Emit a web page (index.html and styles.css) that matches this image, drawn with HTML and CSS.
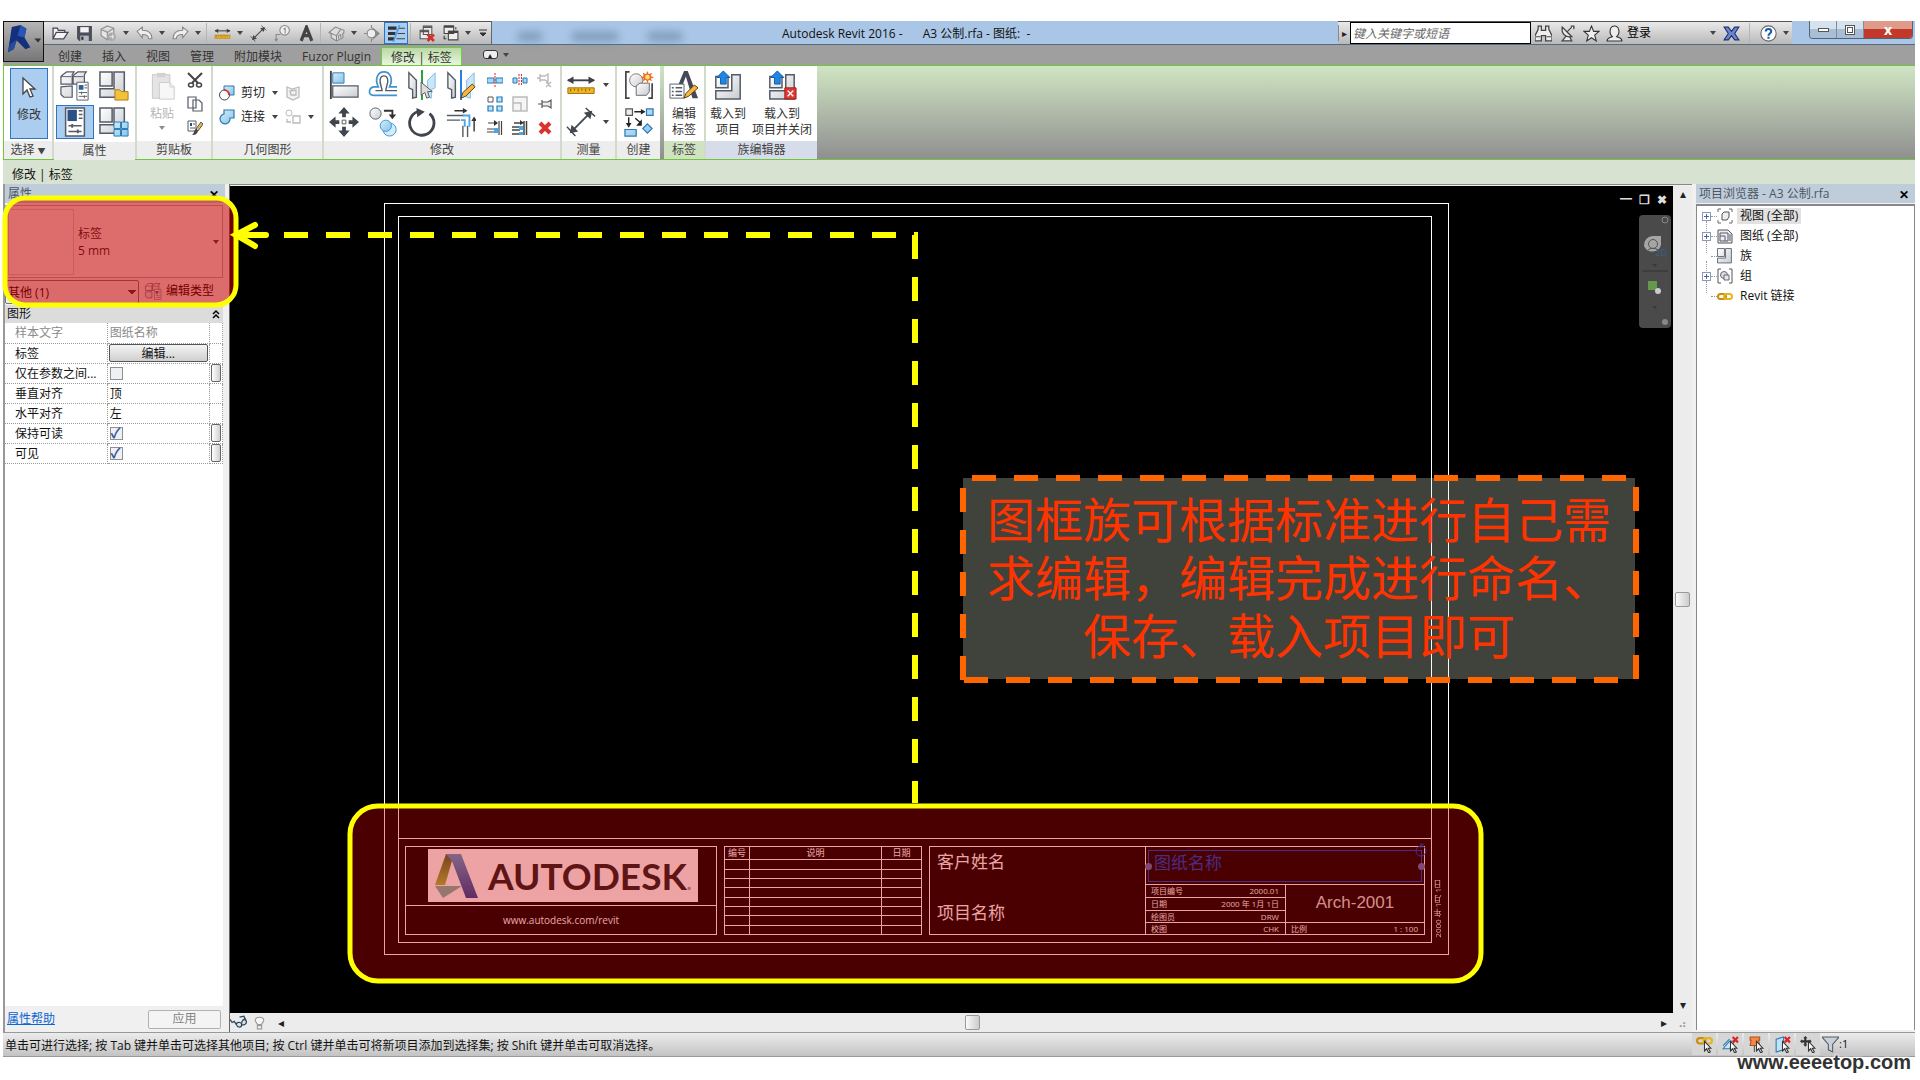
FILE: index.html
```html
<!DOCTYPE html>
<html lang="zh-CN">
<head>
    <meta charset="UTF-8">
    <meta name="viewport" content="width=device-width, initial-scale=1.0">
    <title>Autodesk Revit 2016 - A3 公制.rfa - 图纸</title>
    <link rel="stylesheet" href="styles.css">
</head>
<body>

    <!-- shared icons -->
    <svg class="sprite" aria-hidden="true">
        <defs>
            <linearGradient id="gMetal" x1="0" y1="0" x2="1" y2="1"><stop offset="0" stop-color="#fff"/><stop offset="1" stop-color="#c9ccd2"/></linearGradient>
            <linearGradient id="gBlue" x1="0" y1="0" x2="1" y2="1"><stop offset="0" stop-color="#d3ecf9"/><stop offset="1" stop-color="#86c3ea"/></linearGradient>
            <linearGradient id="gLegL" x1="0" y1="0" x2="0" y2="1"><stop offset="0" stop-color="#4b6a30"/><stop offset="1" stop-color="#a3bf3e"/></linearGradient>
            <linearGradient id="gLegR" x1="0" y1="0" x2="0" y2="1"><stop offset="0" stop-color="#5a9fd0"/><stop offset="1" stop-color="#24459c"/></linearGradient>
        </defs>
        <symbol id="i-arrow" viewBox="0 0 8 8"><path d="M1 2h6L4 6z" fill="#444"/></symbol>
        <symbol id="i-open" viewBox="0 0 16 16"><path d="M1 13V3h4l1 2h6v2M1 13L4 7h11l-4 6z" fill="#f4f4f4" stroke="#454a52" stroke-width="1.2"/></symbol>
        <symbol id="i-save" viewBox="0 0 16 16"><path d="M1 1h14v14H3l-2-2z" fill="#4a4f59"/><path d="M4 2h8v5H4z" fill="#f3f3f3"/><path d="M4 10h8v5H4z" fill="#b4b9c1"/><path d="M5 11h2v3H5z" fill="#333"/></symbol>
        <symbol id="i-sync" viewBox="0 0 16 16"><path d="M7 1l6 2v7l-6 4-6-4V4zM1 4l6 3 6-4M7 7v7" fill="#e6e6e6" stroke="#999" stroke-width="1.2"/><circle cx="11" cy="11" r="4" fill="#aaa"/><path d="M9 11h4m-1-2v4" stroke="#eee"/></symbol>
        <symbol id="i-undo" viewBox="0 0 16 16"><path d="M1 6l5-4v3c6 0 9 2 9 8h-3c0-3-2-4-6-4v3z" fill="#eee" stroke="#888"/></symbol>
        <symbol id="i-redo" viewBox="0 0 16 16"><path d="M15 6l-5-4v3C4 5 1 7 1 13h3c0-3 2-4 6-4v3z" fill="#eee" stroke="#888"/></symbol>
        <symbol id="i-measure" viewBox="0 0 32 32"><path d="M2 11h28" stroke="#3c4048" stroke-width="2"/><path d="M8 7l-7 4 7 4zM24 7l7 4-7 4z" fill="#3c4048"/><path d="M2 19h28v6H2z" fill="#f2b61f" stroke="#9a6c00"/><path d="M5 20v3M9 20v2M13 20v3M17 20v2M21 20v3M25 20v2" stroke="#7b5600"/></symbol>
        <symbol id="i-dim" viewBox="0 0 32 32"><path d="M5 27L27 5" stroke="#44484f" stroke-width="2"/><path d="M4 28l2-9 7 7zM28 4l-2 9-7-7z" fill="#44484f"/><path d="M1 21l9 10M21 1l10 9" stroke="#44484f" stroke-width="1.5"/></symbol>
        <symbol id="i-tag" viewBox="0 0 16 16"><circle cx="10" cy="5" r="4.5" fill="#eee" stroke="#888"/><path d="M9 4l1.500-1v5M2 15V9h4M1 13l1 2 1.500-2" fill="none" stroke="#888"/></symbol>
        <symbol id="i-a" viewBox="0 0 16 16"><path d="M3 15L8 2l5 13M5 10h6" fill="none" stroke="#444" stroke-width="3"/></symbol>
        <symbol id="i-house" viewBox="0 0 16 16"><path d="M1 7l6-5 8 3v2l-1 1v4l-6 3-5-3V8z" fill="#dcdcdc" stroke="#888"/><path d="M1 7l7 3 4-6M8 10v5M10 13v-3l2-1v3" fill="none" stroke="#888"/></symbol>
        <symbol id="i-section" viewBox="0 0 16 16"><path d="M8 2l7 6-7 6z" fill="#888"/><circle cx="7" cy="8" r="4" fill="#eee" stroke="#888"/><path d="M0 8h3M7 0v3M7 13v3" stroke="#888"/></symbol>
        <symbol id="i-thin" viewBox="0 0 16 16"><path d="M0 3h8M0 8h7M0 13h6" stroke="#333" stroke-width="3"/><path d="M10 3h6M9 8h7M8 13h8" stroke="#444"/><path d="M11 0L5 16" stroke="#4aa0ea" stroke-width="1.500"/></symbol>
        <symbol id="i-closewin" viewBox="0 0 16 16"><path d="M5 1h8v8H5zM2 5h8v8H2z" fill="#eee" stroke="#555"/><path d="M5 2h8M2 6h8" stroke="#555" stroke-width="1.500"/><path d="M9 9l6 6M15 9l-6 6" stroke="#d6302b" stroke-width="2.500"/></symbol>
        <symbol id="i-switchwin" viewBox="0 0 16 16"><path d="M2 1h9v7H2zM6 6h9v8H6z" fill="#eee" stroke="#444"/><path d="M2 1.500h9M6 6.500h9" stroke="#444" stroke-width="2"/><path d="M2 10v3h2M13 4V2" fill="none" stroke="#333"/></symbol>
        <symbol id="i-menu" viewBox="0 0 8 8"><path d="M0 1h8M1 4h6L4 7z" fill="#333" stroke="#333"/></symbol>

        <symbol id="i-cursor" viewBox="0 0 16 24"><path d="M2 2v16l4-4 3 7 3-1-3-7h5z" fill="#fff" stroke="#444" stroke-width="1.300"/></symbol>
        <symbol id="i-famtypes" viewBox="0 0 32 32"><path d="M3 4l4-3h8l-2 3v10H1V6zM15 4l4-3h9l-2 3v10H14V6zM1 17l12-1v12H4l-3-3z" fill="url(#gMetal)" stroke="#555b66" stroke-width="1.300"/><path d="M1 6h11M14 6h11" stroke="#555b66"/><path d="M18 12h12v19H18z" fill="#fff" stroke="#555b66"/><path d="M20 15h5v5h-5z" fill="#2f5c92"/><path d="M26 15h3M26 18h3M20 23h9M20 27h9M23 22v3M26 26v3" stroke="#555b66"/></symbol>
        <symbol id="i-family" viewBox="0 0 32 32"><path d="M1 1h13v15H1zM16 1h11v27H1v-9h15z" fill="url(#gMetal)" stroke="#555b66" stroke-width="1.600"/></symbol>
        <symbol id="i-famfolder" viewBox="0 0 32 32"><use href="#i-family"/><path d="M17 20h5l2 2h7v9H17z" fill="#f3c23c" stroke="#a87a12"/></symbol>
        <symbol id="i-famgrid" viewBox="0 0 32 32"><use href="#i-family"/><path d="M16 16h7v7h-7zM24 16h7v7h-7zM16 24h7v7h-7zM24 24h7v7h-7z" fill="url(#gBlue)" stroke="#2078ae"/></symbol>
        <symbol id="i-props" viewBox="0 0 32 32"><path d="M6 1h20v30H6z" fill="#fff" stroke="#555b66" stroke-width="1.600"/><path d="M8 3h10v12H8z" fill="#2a5186"/><path d="M20 4h4M20 8h4M20 12h4M9 20h14M9 26h14" stroke="#555b66" stroke-width="1.600"/><path d="M13 18v4M19 24v4" stroke="#555b66" stroke-width="2"/></symbol>
        <symbol id="i-paste" viewBox="0 0 32 32"><path d="M5 3h20v27H5z" fill="#e4e4e4" stroke="#c4c4c4"/><path d="M10 1h10v5H10z" fill="#d2d2d2"/><path d="M13 12h12l5 5v14H13z" fill="#f7f7f7" stroke="#c8c8c8"/><path d="M25 12v5h5" fill="none" stroke="#c8c8c8"/></symbol>
        <symbol id="i-cut" viewBox="0 0 16 16"><path d="M1 1l10 10M15 1L5 11" stroke="#444" stroke-width="2"/><ellipse cx="4" cy="13" rx="2.500" ry="2" fill="#fff" stroke="#444" stroke-width="1.500"/><ellipse cx="12" cy="13" rx="2.500" ry="2" fill="#fff" stroke="#444" stroke-width="1.500"/></symbol>
        <symbol id="i-copy" viewBox="0 0 16 16"><path d="M1 1h8v11H1zM6 4h6l3 3v8H6z" fill="#fff" stroke="#555b66" stroke-width="1.200"/></symbol>
        <symbol id="i-match" viewBox="0 0 16 16"><path d="M1 1h8v10H1z" fill="#fff" stroke="#555b66"/><path d="M3 3h2v3H3z" fill="#2a5186"/><path d="M6 4h2M3 8h5" stroke="#555b66"/><path d="M9 9l5-7 2 2-5 7z" fill="#e9b94a" stroke="#555"/><path d="M9 9l2 2c-1 4-4 4-6 4 2-1 2-5 4-6z" fill="#444"/></symbol>
        <symbol id="i-geocut" viewBox="0 0 16 16"><path d="M5 1h10v9H5z" fill="url(#gBlue)" stroke="#2b78ae"/><circle cx="5.500" cy="10" r="5" fill="#fff" stroke="#444"/><path d="M5 5a5 5 0 0 1 5 5" fill="none" stroke="#e22" stroke-width="1.500"/></symbol>
        <symbol id="i-geojoin" viewBox="0 0 16 16"><path d="M5 1h10v8h-4a5 5 0 1 1-6-4z" fill="url(#gBlue)" stroke="#2b78ae" stroke-width="1.200"/></symbol>
        <symbol id="i-geoface" viewBox="0 0 16 16"><path d="M2 2l5 2 7-2v10l-6 3-6-3zM5 6l6-1v5H6z" fill="#f2f2f2" stroke="#bbb" stroke-width="1.300"/></symbol>
        <symbol id="i-geosplit" viewBox="0 0 16 16"><circle cx="4" cy="4" r="3" fill="#fff" stroke="#bbb"/><path d="M8 7h7v7H8zM2 10v3h4" fill="none" stroke="#bbb" stroke-width="1.300"/></symbol>

        <symbol id="i-align" viewBox="0 0 32 32"><path d="M2 1v30" stroke="#444" stroke-width="2"/><path d="M4 3h12v11H4z" fill="url(#gBlue)" stroke="#2d7ab4"/><path d="M4 17h27v12H4z" fill="url(#gMetal)" stroke="#555b66" stroke-width="1.300"/></symbol>
        <symbol id="i-offset" viewBox="0 0 32 32"><path d="M31 18h-8c4-8 1-16-6-16S7 10 11 18H7c-6 0-8 9-1 9h25" fill="none" stroke="#3d93cf" stroke-width="1.800"/><path d="M31 22H19c0-4 3-8 2-12-1-5-7-5-8 0s2 8 2 12H8" fill="none" stroke="#555b66" stroke-width="1.500"/></symbol>
        <symbol id="i-mirror" viewBox="0 0 32 32"><path d="M2 3l8 8v18l-4 1V21l-4-2z" fill="url(#gMetal)" stroke="#555b66" stroke-width="1.500"/><path d="M30 3l-8 8v18l4 1V21l4-2z" fill="#c9e7f8" stroke="#7fbbe0"/></symbol>
        <symbol id="i-mirrorpick" viewBox="0 0 32 32"><use href="#i-mirror"/><path d="M16 0v32" stroke="#1f9b2d" stroke-width="2"/><path d="M15 13v14l4-3 2 6 3-1-2-6h5z" fill="#ddd" stroke="#555"/></symbol>
        <symbol id="i-mirrordraw" viewBox="0 0 32 32"><use href="#i-mirror"/><path d="M16 0v32" stroke="#1c78e0" stroke-width="2"/><path d="M16 30l2-6 10-9 3 3-10 10z" fill="#f4b83a" stroke="#553a10"/></symbol>
        <symbol id="i-move" viewBox="0 0 32 32"><path d="M16 0l6 7h-4v4h-4V7h-4zM16 32l6-7h-4v-4h-4v4h-4zM0 16l7-6v4h4v4H7v4zM32 16l-7-6v4h-4v4h4v4z" fill="#3f444d"/><path d="M14 14h4v4h-4z" fill="#fff" stroke="#555"/></symbol>
        <symbol id="i-copyobj" viewBox="0 0 32 32"><circle cx="8" cy="7" r="6" fill="url(#gMetal)" stroke="#555b66"/><path d="M17 4h9v6" fill="none" stroke="#333" stroke-width="2"/><path d="M22 8h8l-4 5z" fill="#333"/><circle cx="23" cy="24" r="7" fill="#d3ecf9" stroke="#3d93cf"/><circle cx="19" cy="20" r="6" fill="url(#gBlue)" stroke="#3d93cf"/></symbol>
        <symbol id="i-rotate" viewBox="0 0 32 32"><path d="M24 7A13 13 0 1 1 11 5" fill="none" stroke="#3f444d" stroke-width="3"/><path d="M10 1l9 4-8 6z" fill="#3f444d"/></symbol>
        <symbol id="i-trim" viewBox="0 0 32 32"><path d="M1 9h18M1 14h14M23 20v12M18 20v12" stroke="#555b66" stroke-width="1.500"/><path d="M18 9h7v12M16 14h4v7" fill="none" stroke="#4aa6e6" stroke-width="2"/><path d="M9 4h12M30 26V14" stroke="#333" stroke-width="1.500"/><path d="M18 1l5 3-5 3zM27 15h6l-3-5z" fill="#333"/></symbol>
        <symbol id="i-split" viewBox="0 0 16 16"><path d="M0 6h7v5H0zM9 6h7v5H9z" fill="#a9d6f2" stroke="#1f7ab8"/><path d="M8 1v14" stroke="#d22" stroke-dasharray="2 1"/></symbol>
        <symbol id="i-splitgap" viewBox="0 0 16 16"><path d="M1 6h4v5H1zM11 6h4v5h-4z" fill="#a9d6f2" stroke="#1f7ab8"/><path d="M7 2v12M9.500 2v12" stroke="#d22" stroke-dasharray="2 1"/></symbol>
        <symbol id="i-pin" viewBox="0 0 16 16"><path d="M1 8h4M5 4v8M5 6h6l3-2v8l-3-2H5" fill="#eee" stroke="#555" stroke-width="1.200"/></symbol>
        <symbol id="i-unpin" viewBox="0 0 16 16"><path d="M0 6h3M3 2v8M3 4h5l3-2v8L8 8H3M9 10l5 5M14 10l-5 5" fill="none" stroke="#bbb" stroke-width="1.400"/></symbol>
        <symbol id="i-array" viewBox="0 0 16 16"><path d="M1 1h5v5H1z" fill="#fff" stroke="#555"/><path d="M10 1h5v5h-5zM1 10h5v5H1zM10 10h5v5h-5z" fill="#bfe2f6" stroke="#1f7ab8" stroke-width="1.200"/></symbol>
        <symbol id="i-scale" viewBox="0 0 16 16"><path d="M1 1h14v14H1zM1 7h8v8H1z" fill="#f5f5f5" stroke="#bbb" stroke-width="1.500"/></symbol>
        <symbol id="i-trimone" viewBox="0 0 16 16"><path d="M1 3h7M0 12h7M0 9h7M12 1v14M14.500 1v14" stroke="#444" stroke-width="1.200"/><path d="M7 8h4v5H7z" fill="#4aa6e6"/><path d="M7 0l4 3-4 3z" fill="#333"/></symbol>
        <symbol id="i-trimmany" viewBox="0 0 16 16"><path d="M2 3h7M0 7h8M0 10h8M0 14h8M12 1v14M14.500 1v14" stroke="#444" stroke-width="1.500"/><path d="M7 6h4v4H7zM7 12h4v3H7z" fill="#4aa6e6"/><path d="M8 0l4 3-4 2z" fill="#333"/></symbol>
        <symbol id="i-delete" viewBox="0 0 16 16"><path d="M3 3l10 10M13 3L3 13" stroke="#d9332e" stroke-width="4"/></symbol>
        <symbol id="i-group" viewBox="0 0 32 32"><path d="M6 2H2v28h4M26 30h4V14" fill="none" stroke="#444" stroke-width="1.800"/><circle cx="13" cy="11" r="7" fill="url(#gMetal)" stroke="#777"/><path d="M13 17l4-3h10v9l-3 4H13z" fill="url(#gMetal)" stroke="#666"/><path d="M25 1l1.500 3.500L30 3l-1.500 3.500L32 8l-3.500 1L30 12l-3.500-1.500L25 14l-1.500-3.500L20 12l1-3-3-1 3-1.500L20 3l3.500 1.500z" fill="#f36a1d"/><circle cx="25" cy="7.500" r="2.500" fill="#ffe27a"/></symbol>
        <symbol id="i-similar" viewBox="0 0 32 32"><path d="M2 2h7v7H2z" fill="#eee" stroke="#555" stroke-width="1.300"/><path d="M24 2h7v7h-7zM1 24h12v7H1zM25 18l5 5-5 5-5-5z" fill="url(#gBlue)" stroke="#2d7ab4" stroke-width="1.300"/><path d="M11 5h8M5 11v7M12 12l6 5" stroke="#222" stroke-width="1.500"/><path d="M18 2l5 3-5 3zM2 17h6l-3 5zM19 13v7h-6z" fill="#222"/></symbol>
        <symbol id="i-editlabel" viewBox="0 0 32 32"><path d="M9 18L16 1h4l11 29h-6L18 7l-4 10z" fill="#454859"/><path d="M1 15h15v15H1z" fill="#fff" stroke="#555b66"/><path d="M3 19h2M7 19h7M3 23h2M7 23h7M3 27h2M7 27h7" stroke="#555b66" stroke-width="1.500"/><path d="M16 30l2-5 9-9 4 3-10 9z" fill="#f4b83a" stroke="#553a10"/></symbol>
        <symbol id="i-load" viewBox="0 0 32 32"><path d="M3 7h13v12H3zM20 5h9v26H3v-9h17z" fill="url(#gMetal)" stroke="#555b66" stroke-width="1.600"/><path d="M11 1l7 7h-4v7H8V8H4z" fill="#1e86e5" stroke="#0d5ba6"/></symbol>
        <symbol id="i-loadclose" viewBox="0 0 32 32"><use href="#i-load"/><path d="M19 19h12v12H19z" fill="#dc3a35" stroke="#9f1a17"/><path d="M22 22l6 6M28 22l-6 6" stroke="#fff" stroke-width="1.500"/></symbol>

        <symbol id="i-find" viewBox="0 0 16 16"><path d="M3 1h3v4h4V1h3v3l3 6v5h-6v-5H6v5H0v-5l3-6z" fill="#eee" stroke="#444" stroke-width="1.200"/><path d="M1 11h4M11 11h4" stroke="#444"/></symbol>
        <symbol id="i-dish" viewBox="0 0 16 16"><path d="M3 2c-1 6 3 10 9 9zM7 10l-4 5h9l-2-4M8 6l4-4M11 1h3v3" fill="#eee" stroke="#444" stroke-width="1.200"/></symbol>
        <symbol id="i-star" viewBox="0 0 16 16"><path d="M8 1l2 5h5l-4 3.500 1.500 5.500L8 12l-4.500 3L5 9.500 1 6h5z" fill="#eee" stroke="#333"/></symbol>
        <symbol id="i-user" viewBox="0 0 16 16"><path d="M1 15c0-3 3-3 5-4C2 7 4 1 8 1s6 6 2 10c2 1 5 1 5 4z" fill="#eee" stroke="#333"/></symbol>
        <symbol id="i-exchange" viewBox="0 0 16 16"><path d="M1 2h4l3 4 3-4h4l-4 6 4 6h-4l-3-4-3 4H1l4-6z" fill="#6c87c9" stroke="#1d2f74"/></symbol>
        <symbol id="i-help" viewBox="0 0 16 16"><circle cx="8" cy="8" r="7.200" fill="#fff" stroke="#666"/><path d="M5.500 6c0-3 5-3 5 0 0 2-2.500 2-2.500 4M8 11v2" fill="none" stroke="#1b58b0" stroke-width="2"/></symbol>

        <symbol id="i-views" viewBox="0 0 16 16"><path d="M4 1H1v3M12 1h3v3M1 12v3h3M15 12v3h-3" fill="none" stroke="#666"/><path d="M5 6l2-2h5v5l-2 3H5z" fill="#eee" stroke="#555"/></symbol>
        <symbol id="i-sheets" viewBox="0 0 16 16"><path d="M1 2h10l4 4v9H1z" fill="#eee" stroke="#555"/><path d="M3 5h8v8H3zM3 8h5v5M13 6v7" fill="none" stroke="#557"/></symbol>
        <symbol id="i-group16" viewBox="0 0 16 16"><path d="M4 1H1v14h3M12 1h3v14h-3" fill="none" stroke="#555"/><circle cx="7" cy="7" r="3.500" fill="#ddd" stroke="#667"/><path d="M7 7h5v5H7z" fill="#e8e8e8" stroke="#667"/></symbol>
        <symbol id="i-link" viewBox="0 0 16 16"><rect x="1" y="6" width="8" height="5" rx="2.500" fill="none" stroke="#c98f0a" stroke-width="2"/><rect x="7" y="6" width="8" height="5" rx="2.500" fill="none" stroke="#e6b422" stroke-width="2"/></symbol>
        <symbol id="i-glasses" viewBox="0 0 16 16"><path d="M0 5l2 3 2-1 2 3c1 3 5 3 5 0 0-2-3-3-5-1M11 10c4 1 5-2 4-4-2-2-4 0-4 3M9 3l4-1 2 4" fill="#d5e6ee" stroke="#345" stroke-width="1.200"/></symbol>
        <symbol id="i-bulb" viewBox="0 0 16 16"><path d="M6 10c0-2-2-2-2-4 0-4 8-4 8 0 0 2-2 2-2 4zM6 11h4v3H6z" fill="#f6f6f6" stroke="#999"/></symbol>
        <symbol id="s-cursor" viewBox="0 0 16 16"><path d="M8 5v9l2-2 2 4 1.500-1-2-3.500H14z" fill="#fff" stroke="#333"/></symbol>
        <symbol id="s-link" viewBox="0 0 16 16"><use href="#i-link" y="-4"/><use href="#s-cursor"/></symbol>
        <symbol id="s-under" viewBox="0 0 16 16"><path d="M1 12l6-7h5l-5 7zM1 9l6-6" fill="#cfe8f7" stroke="#2d7ab4"/><path d="M10 1l5 5M15 1l-5 5" stroke="#d22" stroke-width="2"/><use href="#s-cursor"/></symbol>
        <symbol id="s-pin" viewBox="0 0 16 16"><path d="M2 1h9v3h-1l1 5H2l1-5H2z" fill="#ef8a4a" stroke="#b4501a"/><path d="M6 9v6" stroke="#555"/><use href="#s-cursor"/></symbol>
        <symbol id="s-face" viewBox="0 0 16 16"><path d="M2 3l7-2v12l-7 2z" fill="#bfe2f6" stroke="#2d7ab4"/><path d="M10 1l5 5M15 1l-5 5" stroke="#d22" stroke-width="2"/><use href="#s-cursor"/></symbol>
        <symbol id="s-drag" viewBox="0 0 16 16"><path d="M5 0l2 2H6v2h3V3l2 2-2 2V6H6v2h1l-2 2-2-2h1V6H2v1L0 5l2-2v1h2V2H3z" fill="#333"/><use href="#s-cursor"/></symbol>
        <symbol id="s-filter" viewBox="0 0 16 16"><path d="M0 1h16l-6 7v7l-4-2V8z" fill="#c9d0d8" stroke="#555b66"/></symbol>
    </svg>

    <div class="app">
        <header class="titlebar">
            <div class="qat">
                <button class="qat-btn" title="打开"><svg><use href="#i-open"/></svg></button>
                <button class="qat-btn" title="保存"><svg><use href="#i-save"/></svg></button>
                <button class="qat-btn" title="同步"><svg><use href="#i-sync"/></svg></button>
                <button class="drop" title="同步选项"><svg><use href="#i-arrow"/></svg></button>
                <button class="qat-btn" title="放弃"><svg><use href="#i-undo"/></svg></button>
                <button class="drop" title="放弃列表"><svg><use href="#i-arrow"/></svg></button>
                <button class="qat-btn" title="重做"><svg><use href="#i-redo"/></svg></button>
                <button class="drop" title="重做列表"><svg><use href="#i-arrow"/></svg></button>
                <span class="sep"></span>
                <button class="qat-btn" title="测量"><svg><use href="#i-measure"/></svg></button>
                <button class="drop" title="测量选项"><svg><use href="#i-arrow"/></svg></button>
                <button class="qat-btn" title="对齐尺寸标注"><svg><use href="#i-dim"/></svg></button>
                <button class="qat-btn" title="标记"><svg><use href="#i-tag"/></svg></button>
                <button class="qat-btn" title="文字"><svg><use href="#i-a"/></svg></button>
                <span class="sep"></span>
                <button class="qat-btn" title="三维视图"><svg><use href="#i-house"/></svg></button>
                <button class="drop" title="三维选项"><svg><use href="#i-arrow"/></svg></button>
                <button class="qat-btn" title="剖面"><svg><use href="#i-section"/></svg></button>
                <button class="qat-btn on" title="细线"><svg><use href="#i-thin"/></svg></button>
                <span class="sep"></span>
                <button class="qat-btn" title="关闭隐藏窗口"><svg><use href="#i-closewin"/></svg></button>
                <button class="qat-btn" title="切换窗口"><svg><use href="#i-switchwin"/></svg></button>
                <button class="drop" title="窗口列表"><svg><use href="#i-arrow"/></svg></button>
                <button class="drop menu" title="自定义"><svg><use href="#i-menu"/></svg></button>
            </div>
            <div class="glass"><i></i><i></i><i></i></div>
            <h1 class="app-title"><span>Autodesk Revit 2016 -</span><span>A3 公制.rfa - 图纸:&nbsp; -</span></h1>
            <div class="infocenter">
                <button class="toggle" title="收拢">▸</button>
                <input class="search" type="text" placeholder="键入关键字或短语" aria-label="搜索">
                <button class="qat-btn" title="搜索"><svg><use href="#i-find"/></svg></button>
                <button class="qat-btn" title="通讯中心"><svg><use href="#i-dish"/></svg></button>
                <button class="qat-btn" title="收藏夹"><svg><use href="#i-star"/></svg></button>
                <button class="login"><svg><use href="#i-user"/></svg>登录</button>
                <button class="drop" title="登录选项"><svg><use href="#i-arrow"/></svg></button>
                <button class="qat-btn" title="Exchange"><svg><use href="#i-exchange"/></svg></button>
                <span class="sep"></span>
                <button class="qat-btn" title="帮助"><svg><use href="#i-help"/></svg></button>
                <button class="drop" title="帮助选项"><svg><use href="#i-arrow"/></svg></button>
            </div>
            <div class="win-btns">
                <button class="win-min" title="最小化"><i></i></button>
                <button class="win-max" title="还原"><i></i></button>
                <button class="win-close" title="关闭">x</button>
            </div>
        </header>
        <button class="app-btn" title="应用程序菜单">
            <svg viewBox="0 0 40 40"><path d="M8 5l9-2 6 4-2 9 6 10-5 2-9-9-3 9-6 3z" fill="#14307c"/><path d="M17 3l6 4-2 9-7-2z" fill="#2b55b5"/><path d="M6 23l7-5-3 10-6 3z" fill="#274c9f"/><path d="M31 17h7l-3 4z" fill="#333"/></svg>
        </button>

        <nav class="tabs">
            <a href="#">创建</a>
            <a href="#">插入</a>
            <a href="#">视图</a>
            <a href="#">管理</a>
            <a href="#">附加模块</a>
            <a href="#">Fuzor Plugin</a>
            <a href="#" class="active">修改 | 标签</a>
            <button class="min-ribbon" title="最小化功能区"><i>▴</i></button>
            <button class="drop" title="功能区选项"><svg><use href="#i-arrow"/></svg></button>
        </nav>

        <div class="ribbon">
            <section class="panel p-select">
                <div class="panel-body"><button class="big on"><svg class="cur"><use href="#i-cursor"/></svg><span>修改</span></button></div>
                <div class="panel-title">选择 <b>▼</b></div>
            </section>
            <section class="panel p-props">
                <div class="panel-body grid2">
                    <button title="族类型"><svg><use href="#i-famtypes"/></svg></button>
                    <button title="族类别"><svg><use href="#i-famfolder"/></svg></button>
                    <button title="属性" class="on"><svg><use href="#i-props"/></svg></button>
                    <button title="类型属性"><svg><use href="#i-famgrid"/></svg></button>
                </div>
                <div class="panel-title">属性</div>
            </section>
            <section class="panel p-clip">
                <div class="panel-body">
                    <button class="big" disabled><svg><use href="#i-paste"/></svg><span>粘贴</span><svg class="mini"><use href="#i-arrow"/></svg></button>
                    <div class="smalls">
                        <button title="剪切"><svg><use href="#i-cut"/></svg></button>
                        <button title="复制"><svg><use href="#i-copy"/></svg></button>
                        <button title="匹配类型"><svg><use href="#i-match"/></svg></button>
                    </div>
                </div>
                <div class="panel-title">剪贴板</div>
            </section>
            <section class="panel p-geo">
                <div class="panel-body rows">
                    <div class="row"><button><svg><use href="#i-geocut"/></svg>剪切</button><button class="drop" title="剪切选项"><svg><use href="#i-arrow"/></svg></button><button title="拆分面"><svg><use href="#i-geoface"/></svg></button></div>
                    <div class="row"><button><svg><use href="#i-geojoin"/></svg>连接</button><button class="drop" title="连接选项"><svg><use href="#i-arrow"/></svg></button><button title="填色"><svg><use href="#i-geosplit"/></svg></button><button class="drop" title="填色选项"><svg><use href="#i-arrow"/></svg></button></div>
                </div>
                <div class="panel-title">几何图形</div>
            </section>
            <section class="panel p-modify">
                <div class="panel-body">
                    <div class="grid4">
                        <button title="对齐"><svg><use href="#i-align"/></svg></button>
                        <button title="偏移"><svg><use href="#i-offset"/></svg></button>
                        <button title="镜像 - 拾取轴"><svg><use href="#i-mirrorpick"/></svg></button>
                        <button title="镜像 - 绘制轴"><svg><use href="#i-mirrordraw"/></svg></button>
                        <button title="移动"><svg><use href="#i-move"/></svg></button>
                        <button title="复制"><svg><use href="#i-copyobj"/></svg></button>
                        <button title="旋转"><svg><use href="#i-rotate"/></svg></button>
                        <button title="修剪"><svg><use href="#i-trim"/></svg></button>
                    </div>
                    <div class="grid3">
                        <button title="拆分图元"><svg><use href="#i-split"/></svg></button>
                        <button title="用间隙拆分"><svg><use href="#i-splitgap"/></svg></button>
                        <button title="解锁"><svg><use href="#i-unpin"/></svg></button>
                        <button title="阵列"><svg><use href="#i-array"/></svg></button>
                        <button title="缩放"><svg><use href="#i-scale"/></svg></button>
                        <button title="锁定"><svg><use href="#i-pin"/></svg></button>
                        <button title="修剪单个图元"><svg><use href="#i-trimone"/></svg></button>
                        <button title="修剪多个图元"><svg><use href="#i-trimmany"/></svg></button>
                        <button title="删除"><svg><use href="#i-delete"/></svg></button>
                    </div>
                </div>
                <div class="panel-title">修改</div>
            </section>
            <section class="panel p-measure">
                <div class="panel-body measure">
                    <button title="测量"><svg><use href="#i-measure"/></svg></button><button class="drop" title="测量选项"><svg><use href="#i-arrow"/></svg></button>
                    <button title="对齐标注"><svg><use href="#i-dim"/></svg></button><button class="drop" title="标注选项"><svg><use href="#i-arrow"/></svg></button>
                </div>
                <div class="panel-title">测量</div>
            </section>
            <section class="panel p-create">
                <div class="panel-body grid1">
                    <button title="创建组"><svg><use href="#i-group"/></svg></button>
                    <button title="创建类似"><svg><use href="#i-similar"/></svg></button>
                </div>
                <div class="panel-title">创建</div>
            </section>
            <section class="panel p-label">
                <div class="panel-body"><button class="big"><svg><use href="#i-editlabel"/></svg><span>编辑<br>标签</span></button></div>
                <div class="panel-title green">标签</div>
            </section>
            <section class="panel p-family">
                <div class="panel-body">
                    <button class="big"><svg><use href="#i-load"/></svg><span>载入到<br>项目</span></button>
                    <button class="big"><svg><use href="#i-loadclose"/></svg><span>载入到<br>项目并关闭</span></button>
                </div>
                <div class="panel-title blue">族编辑器</div>
            </section>
        </div>

        <div class="options-bar">修改 | 标签</div>

        <main class="workspace">
            <aside class="properties">
                <h2 class="pane-head">属性 <button title="关闭">✕</button></h2>
                <div class="type-selector">
                    <div class="preview"></div>
                    <p>标签<br>5 mm</p>
                    <button class="drop" title="类型列表"><svg><use href="#i-arrow"/></svg></button>
                </div>
                <div class="filter-row">
                    <select aria-label="图元过滤器"><option>其他 (1)</option></select>
                    <button class="edit-type"><svg><use href="#i-famtypes"/></svg>编辑类型</button>
                </div>
                <table class="props">
                    <thead><tr><th colspan="2">图形</th><th><svg viewBox="0 0 8 10"><path d="M1 5l3-3 3 3M1 9l3-3 3 3" fill="none" stroke="#000" stroke-width="1.500"/></svg></th></tr></thead>
                    <tbody>
                        <tr class="dim"><td>样本文字</td><td>图纸名称</td><td></td></tr>
                        <tr><td>标签</td><td><button class="edit">编辑...</button></td><td></td></tr>
                        <tr><td><label for="wrap">仅在参数之间...</label></td><td><input type="checkbox" id="wrap"></td><td><button class="assoc" title="关联参数"></button></td></tr>
                        <tr><td>垂直对齐</td><td>顶</td><td></td></tr>
                        <tr><td>水平对齐</td><td>左</td><td></td></tr>
                        <tr><td><label for="readable">保持可读</label></td><td><input type="checkbox" id="readable" checked></td><td><button class="assoc" title="关联参数"></button></td></tr>
                        <tr><td><label for="visible">可见</label></td><td><input type="checkbox" id="visible" checked></td><td><button class="assoc" title="关联参数"></button></td></tr>
                    </tbody>
                </table>
                <div class="props-foot"><a href="#">属性帮助</a><button disabled>应用</button></div>
            </aside>

            <div class="view">
                <div class="canvas">
                    <div class="sheet">
                        <div class="frame">
                            <div class="title-block">
                                <div class="tb-logo">
                                    <div class="logo">
                                        <svg viewBox="0 0 46 46"><path d="M1 32L12 1h8L11 32z" fill="url(#gLegL)"/><path d="M12 1h15l17 44H32L18 8z" fill="url(#gLegR)"/><path d="M1 33h27L9 45z" fill="#78bbac"/></svg>
                                        <span>AUTODESK<small>.</small></span>
                                    </div>
                                    <div class="url">www.autodesk.com/revit</div>
                                </div>
                                <table class="tb-rev">
                                    <tr><th>编号</th><th>说明</th><th>日期</th></tr>
                                    <tr><td></td><td></td><td></td></tr>
                                    <tr><td></td><td></td><td></td></tr>
                                    <tr><td></td><td></td><td></td></tr>
                                    <tr><td></td><td></td><td></td></tr>
                                    <tr><td></td><td></td><td></td></tr>
                                    <tr><td></td><td></td><td></td></tr>
                                    <tr><td></td><td></td><td></td></tr>
                                    <tr><td></td><td></td><td></td></tr>
                                </table>
                                <div class="tb-info">
                                    <div class="client"><span>客户姓名</span><span>项目名称</span></div>
                                    <div class="details">
                                        <div class="sheet-name">
                                            <span>图纸名称</span>
                                            <svg class="rotate" viewBox="0 0 12 14"><circle cx="6" cy="8" r="5"/><path d="M6 0v5M6 3l3-2"/></svg>
                                        </div>
                                        <div class="fields">
                                            <div class="left">
                                                <p><span>项目编号</span><span>2000.01</span></p>
                                                <p><span>日期</span><span>2000 年 1月 1日</span></p>
                                                <p><span>绘图员</span><span>DRW</span></p>
                                                <p><span>校图</span><span>CHK</span></p>
                                            </div>
                                            <div class="right">
                                                <div class="number">Arch-2001</div>
                                                <p><span>比例</span><span>1 : 100</span></p>
                                            </div>
                                        </div>
                                    </div>
                                </div>
                            </div>
                        </div>
                        <div class="plot-date">2000 年 1月 1日</div>
                    </div>

                    <div class="doc-btns"><button title="最小化">━</button><button title="还原">❐</button><button title="关闭">✖</button></div>
                    <div class="navbar">
                        <svg viewBox="0 0 32 113">
                            <circle cx="26" cy="5" r="3" fill="none" stroke="#888"/>
                            <path d="M5 31a9 9 0 0 1 9-10h8v9a9 9 0 0 1-17 1z" fill="#a5a5a5"/><circle cx="14" cy="29" r="4.500" fill="none" stroke="#555"/><path d="M8 37c1-5 11-5 12 0" fill="none" stroke="#555"/>
                            <path d="M3 56h26" stroke="#333"/><path d="M9 66h9v9H9z" fill="#65974c"/><circle cx="19" cy="76" r="3" fill="#ccc"/>
                            <circle cx="26" cy="107" r="3" fill="#888"/>
                            <path d="M13 49h5l-2 3zM13 91h5l-2 3z" fill="#383838"/>
                        </svg>
                        <span>2D</span>
                    </div>
                </div>
                <div class="vscroll"><i>▴</i><b></b><i>▾</i></div>
                <div class="hscroll">
                    <svg><use href="#i-glasses"/></svg>
                    <svg><use href="#i-bulb"/></svg>
                    <i>◂</i><span class="track"><b></b></span><i>▸</i>
                </div>
                <div class="grip">⣠</div>
            </div>

            <aside class="browser">
                <h2 class="pane-head">项目浏览器 - A3 公制.rfa <button title="关闭">✕</button></h2>
                <ul class="tree">
                    <li class="selected"><i class="exp"></i><svg><use href="#i-views"/></svg><a href="#">视图 (全部)</a></li>
                    <li><i class="exp"></i><svg><use href="#i-sheets"/></svg><a href="#">图纸 (全部)</a></li>
                    <li><i></i><svg viewBox="0 0 30 30"><use href="#i-family" width="32" height="32"/></svg><a href="#">族</a></li>
                    <li><i class="exp"></i><svg><use href="#i-group16"/></svg><a href="#">组</a></li>
                    <li><i></i><svg><use href="#i-link"/></svg><a href="#">Revit 链接</a></li>
                </ul>
            </aside>
        </main>

        <footer class="statusbar">
            <p>单击可进行选择; 按 Tab 键并单击可选择其他项目; 按 Ctrl 键并单击可将新项目添加到选择集; 按 Shift 键并单击可取消选择。</p>
            <div class="status-icons">
                <button title="选择链接"><svg><use href="#s-link"/></svg></button>
                <button title="选择基线图元"><svg><use href="#s-under"/></svg></button>
                <button title="选择锁定图元"><svg><use href="#s-pin"/></svg></button>
                <button title="按面选择图元"><svg><use href="#s-face"/></svg></button>
                <button title="选择时拖曳图元"><svg><use href="#s-drag"/></svg></button>
                <button class="filter" title="过滤器"><svg><use href="#s-filter"/></svg>:1</button>
            </div>
        </footer>
    </div>

    <!-- tutorial mark-up on top of the window -->
    <svg class="marks" aria-hidden="true">
        <rect class="zone" x="5" y="198" width="231" height="107" rx="20"/>
        <rect class="zone light" x="350" y="806" width="1131" height="175" rx="28"/>
        <path class="dash" d="M284 235H918"/>
        <path class="dash" d="M915 235V803"/>
        <path class="head" d="M266 235H236M255 225L236 235L255 246"/>
    </svg>
    <div class="note">
        <p>图框族可根据标准进行自己需求编辑，编辑完成进行命名、保存、载入项目即可</p>
        <svg aria-hidden="true">
            <path d="M12 3H672M4 205H672M3 13V205M676 12V205"/>
        </svg>
    </div>
    <div class="watermark">www.eeeetop.com</div>

</body>
</html>
```
FILE: styles.css
```css
* {
    box-sizing: border-box;
}
body {
    margin: 0;
    position: relative;
    background: #fff;
    color: #222;
    font: 12px/16px "Open Sans", "Noto Sans CJK SC", sans-serif;
}
h1, h2, p, ul {
    margin: 0;
    padding: 0;
    font-size: 12px;
    font-weight: normal;
}
button {
    padding: 0;
    border: 0;
    background: none;
    color: inherit;
    font: inherit;
}
i {
    font-style: normal;
}
.sprite {
    position: absolute;
    width: 0;
    height: 0;
}
.app {
    position: relative;
    display: flex;
    flex-direction: column;
    height: 100vh;
    padding: 21px 5px 23px 3px;
}

/* title bar */
.titlebar {
    display: flex;
    height: 24px;
    padding-left: 41px;
    background: #a9c6e6;
    border-bottom: 1px solid #566a80;
}
.qat, .infocenter {
    display: flex;
    align-items: center;
    background: linear-gradient(#e9e9e9, #b9b9b9);
    border-top: 1px solid #555;
}
.qat {
    padding-left: 4px;
    border-right: 1px solid #666;
}
.qat-btn {
    display: flex;
    align-items: center;
    justify-content: center;
    width: 24px;
    height: 22px;
}
.qat-btn svg {
    width: 17px;
    height: 17px;
}
.qat-btn.on {
    background: #a9cdf0;
    border: 1px solid #2d74c4;
}
.drop {
    display: flex;
    align-items: center;
    justify-content: center;
    width: 12px;
}
.drop svg {
    width: 8px;
    height: 8px;
}
.drop.menu {
    width: 17px;
}
.sep {
    width: 1px;
    height: 20px;
    margin: 0 3px 0 2px;
    background: #b5b5b5;
}
.glass {
    display: flex;
    gap: 30px;
    width: 290px;
    padding: 11px 0 0 26px;
}
.glass i {
    width: 24px;
    height: 9px;
    background: #5f7c9c;
    opacity: .6;
    filter: blur(4px);
}
.glass i:nth-child(2) {
    width: 46px;
}
.glass i:nth-child(3) {
    width: 34px;
}
.app-title {
    display: flex;
    flex: 1;
    gap: 20px;
    padding-top: 5px;
    white-space: nowrap;
    color: #111;
}
.toggle {
    width: 12px;
    border-left: 1px solid #888;
    font-size: 10px;
}
.search {
    width: 181px;
    height: 22px;
    border: 1px solid #000;
    background: #fff;
    font: italic 12px "Open Sans", "Noto Sans CJK SC", sans-serif;
}
.search::placeholder {
    color: #666;
}
.login {
    display: flex;
    align-items: center;
    gap: 4px;
    width: 104px;
    padding-left: 3px;
    color: #000;
}
.login svg {
    width: 17px;
    height: 17px;
}
.infocenter .sep {
    margin: 0 6px;
}
.win-btns {
    display: flex;
    height: 18px;
    margin: 0 2px 0 17px;
    border: 1px solid #51647a;
    border-top: 0;
    border-radius: 0 0 4px 4px;
    overflow: hidden;
}
.win-btns button {
    display: flex;
    align-items: center;
    justify-content: center;
    width: 27px;
    background: linear-gradient(#d6e2ee 50%, #a9bdd4 50%);
    border-right: 1px solid #7a8da5;
}
.win-btns .win-close {
    width: 48px;
    background: linear-gradient(#e09a8a 50%, #c0392b 50%);
    border: 0;
    color: #fff;
    font-weight: bold;
    font-size: 14px;
}
.win-min i {
    width: 11px;
    height: 4px;
    background: #fff;
    border: 1px solid #555;
}
.win-max i {
    width: 10px;
    height: 10px;
    background: #fff;
    border: 3px double #555;
}
.app-btn {
    position: absolute;
    left: 3px;
    top: 21px;
    width: 41px;
    height: 41px;
    border: 1px solid #111;
    background: linear-gradient(#b5b5b5, #767676);
    z-index: 2;
}
.app-btn svg {
    display: block;
    width: 39px;
    height: 39px;
}

/* tabs */
.tabs {
    display: flex;
    height: 20px;
    padding-left: 45px;
    background: #9f9f9f;
}
.tabs a {
    padding: 4px 10px 0;
    color: #333;
    text-decoration: none;
}
.tabs .active {
    margin-top: 2px;
    padding: 2px 9px 0;
    border: 1px solid #6fce3a;
    border-bottom: 0;
    background: linear-gradient(#b9d8a4, #e8f7de);
}
.min-ribbon {
    margin: 5px 2px 0 21px;
    width: 15px;
    height: 9px;
    border: 1px solid #334;
    border-radius: 3px;
    background: #eee;
    font-size: 8px;
    line-height: 6px;
}
.tabs .drop {
    height: 20px;
}

/* ribbon */
.ribbon {
    display: flex;
    height: 95px;
    border: 1px solid #6fc53c;
    border-width: 1px 0 1px 1px;
    background: linear-gradient(#cfe5c2, #8f8f8f);
}
.panel {
    display: flex;
    flex-direction: column;
    border-right: 2px solid #d2dacd;
    background: #fff;
}
.panel-body {
    display: flex;
    flex: 1;
}
.panel-title {
    height: 18px;
    background: #ededed;
    text-align: center;
    color: #444;
    line-height: 18px;
}
.panel-title b {
    font-size: 8px;
}
.panel-title.green {
    background: #cfe3c1;
}
.panel-title.blue {
    background: #d7dcea;
}
.panel svg {
    display: block;
    width: 30px;
    height: 30px;
}
.panel .drop svg {
    width: 8px;
    height: 8px;
}
.panel .on {
    background: #aacdf0;
    border: 1px solid #2d74c4;
}
.big {
    display: flex;
    flex-direction: column;
    align-items: center;
    color: #333;
}
.big:disabled {
    color: #b5b5b5;
}
.p-select { width: 50px; }
.p-props { width: 83px; }
.p-clip { width: 76px; }
.p-geo { width: 111px; }
.p-modify { width: 238px; }
.p-measure { width: 55px; }
.p-create { width: 43px; margin-right: 4px; border-right: 0; }
.p-label { width: 42px; }
.p-family { width: 111px; border: 0; }
.p-select .panel-body {
    padding: 2px 0 2px 6px;
}
.p-select .big {
    width: 38px;
    padding-top: 7px;
    gap: 7px;
}
.panel .cur {
    width: 16px;
    height: 24px;
}
.grid2 {
    display: grid;
    grid-template-columns: 38px 38px;
    grid-template-rows: 34px 34px;
    gap: 2px 1px;
    padding: 3px 2px;
}
.grid2 button, .grid1 button, .grid4 button, .grid3 button {
    display: flex;
    align-items: center;
    justify-content: center;
}
.p-clip .big {
    width: 50px;
    padding: 5px 0 0;
    gap: 5px;
}
.p-clip .big svg:first-child {
    width: 28px;
}
.p-clip .panel-body .mini {
    width: 8px;
    height: 8px;
    margin-top: -3px;
    opacity: .6;
}
.smalls {
    display: flex;
    flex-direction: column;
    gap: 8px;
    padding-top: 6px;
}
.smalls svg, .row svg {
    width: 16px;
    height: 16px;
}
.rows {
    flex-direction: column;
    justify-content: center;
    gap: 8px;
    padding: 3px 0 0 6px;
}
.row {
    display: flex;
    align-items: center;
}
.row button:first-child {
    display: flex;
    gap: 6px;
}
.row .drop {
    width: 20px;
}
.row svg {
    flex: none;
}
.grid4 {
    display: grid;
    grid-template-columns: repeat(4, 39px);
    grid-template-rows: repeat(2, 37px);
}
.grid3 {
    display: grid;
    grid-template-columns: repeat(3, 25px);
    grid-template-rows: repeat(3, 24px);
    padding: 2px 0 0 2px;
}
.grid3 svg {
    width: 16px;
    height: 16px;
}
.measure {
    display: grid;
    grid-template-columns: 34px 16px;
    grid-template-rows: 37px 37px;
    align-items: center;
    padding-left: 4px;
}
.grid1 {
    display: grid;
    grid-template-rows: 37px 37px;
    justify-content: center;
}
.p-label .panel-body, .p-family .panel-body {
    padding-top: 4px;
}
.p-label .big, .p-family .big {
    gap: 6px;
}
.p-label .big {
    width: 100%;
}
.p-family .big {
    width: 44px;
}
.p-family .big + .big {
    width: 64px;
}

.options-bar {
    height: 24px;
    padding: 7px 9px 0;
    background: #d7e3d0;
    color: #111;
}

/* workspace */
.workspace {
    display: flex;
    flex: 1;
    min-height: 0;
    background: #f0f0f0;
}
.pane-head {
    display: flex;
    justify-content: space-between;
    height: 19px;
    padding: 2px 4px 0 3px;
    background: #bfcddb;
    color: #4e5560;
}
.pane-head button {
    width: 14px;
    color: #000;
    font-weight: bold;
}
.properties {
    display: flex;
    flex-direction: column;
    width: 222px;
    margin-right: 4px;
    border-left: 2px solid #999;
    background: linear-gradient(#fff, #fff) 0 140px / 218px calc(100% - 166px) no-repeat;
}
.type-selector {
    display: flex;
    align-items: center;
    height: 73px;
    margin: 2px 2px 0 0;
    padding-left: 2px;
    border: 1px solid #aaa;
    background: #f2f2f2;
}
.preview {
    width: 66px;
    height: 66px;
    margin-right: 4px;
    border: 1px solid #c9c9c9;
}
.type-selector p {
    flex: 1;
    line-height: 17px;
}
.filter-row {
    display: flex;
    align-items: center;
    height: 27px;
    gap: 6px;
    color: #000;
}
.filter-row select {
    appearance: none;
    width: 134px;
    height: 24px;
    padding: 2px 2px 0;
    border: 1px solid #777;
    background:
        linear-gradient(45deg, transparent 50%, #333 50%) 121px 9px / 4px 4px no-repeat,
        linear-gradient(-45deg, transparent 50%, #333 50%) 125px 9px / 4px 4px no-repeat,
        #eee;
    font: inherit;
    border-radius: 2px;
}
.filter-row select {
    background:
        conic-gradient(from -45deg at 50% 100%, #333 90deg, transparent 0) 122px 9px / 8px 4px no-repeat,
        #eee;
}
.edit-type {
    display: flex;
    gap: 4px;
}
.edit-type svg {
    width: 17px;
    height: 17px;
}
.props {
    flex: none;
    width: 218px;
    border-collapse: collapse;
    table-layout: fixed;
    background: #fff;
    color: #111;
}
.props th {
    height: 18px;
    padding: 0 2px;
    background: #dcdcdc;
    font-weight: normal;
    text-align: left;
    line-height: 16px;
}
.props th + th {
    width: 13px;
}
.props th svg {
    display: block;
    width: 8px;
    height: 10px;
}
.props td {
    height: 20px;
    padding: 0 2px;
    border-right: 1px dotted #999;
    border-bottom: 1px dotted #999;
    line-height: 17px;
    white-space: nowrap;
}
.props td:first-child {
    width: 103px;
    padding-left: 10px;
}
.props td:last-child {
    padding: 0;
}
.dim {
    color: #8a8a8a;
}
.props .edit {
    display: block;
    width: 99px;
    height: 18px;
    margin-left: -1px;
    border: 1px solid #555;
    border-radius: 2px;
    background: linear-gradient(#f4f4f4, #cfcfcf);
    line-height: 15px;
}
.props input {
    display: block;
    appearance: none;
    width: 13px;
    height: 13px;
    margin: 0;
    border: 1px solid #8e8f8f;
    background: #eef0f3;
}
.props input:checked::before {
    content: "✓";
    display: block;
    color: #3a54a0;
    font-weight: bold;
    line-height: 11px;
}
.assoc {
    display: block;
    width: 10px;
    height: 18px;
    margin-left: 1px;
    border: 1px solid #666;
    border-radius: 2px;
    background: linear-gradient(90deg, #fff, #d0d0d0);
}
.props-foot {
    display: flex;
    align-items: center;
    justify-content: space-between;
    height: 26px;
    margin-top: auto;
    padding: 0 4px 0 2px;
}
.props-foot a {
    color: #0b66d0;
}
.props-foot button {
    width: 73px;
    height: 19px;
    border: 1px solid #adb2b5;
    border-radius: 2px;
    background: #f4f4f4;
    color: #838383;
}

.view {
    display: grid;
    flex: 1;
    grid-template-columns: 1fr 19px;
    grid-template-rows: 1fr 19px;
    padding-top: 1px;
    border-left: 1px solid #666;
    border-top: 1px solid #888;
}
.canvas {
    position: relative;
    overflow: hidden;
    background: #000;
}
.vscroll {
    display: flex;
    flex-direction: column;
    align-items: center;
    justify-content: space-between;
    background: #ececec;
}
.vscroll b, .track b {
    width: 15px;
    height: 15px;
    border: 1px solid #999;
    border-radius: 2px;
    background: linear-gradient(90deg, #fafafa, #ccc);
}
.hscroll {
    display: flex;
    align-items: center;
    background: #ececec;
}
.hscroll svg {
    width: 17px;
    height: 17px;
    margin-right: 4px;
}
.hscroll i {
    width: 18px;
    text-align: center;
}
.track {
    display: flex;
    justify-content: center;
    flex: 1;
}
.grip {
    background: #ececec;
    color: #999;
    text-align: center;
}

/* drawing sheet */
.sheet {
    position: absolute;
    left: 154px;
    top: 17px;
    width: 1065px;
    height: 752px;
    padding: 12px 16px 11px 13px;
    border: 1px solid #fff;
    color: #fff;
}
.frame {
    display: flex;
    flex-direction: column;
    justify-content: flex-end;
    height: 100%;
    border: 1px solid #fff;
}
.title-block {
    display: flex;
    gap: 7px;
    height: 104px;
    padding: 7px 6px;
    border-top: 1px solid #fff;
}
.tb-logo {
    width: 312px;
    border: 1px solid #fff;
}
.logo {
    display: flex;
    align-items: center;
    gap: 8px;
    width: 270px;
    height: 53px;
    margin: 2px auto 3px 22px;
    padding-left: 6px;
    background: #fff;
    color: #222;
    font: bold 37px "Lato", sans-serif;
}
.logo svg {
    flex: none;
    width: 46px;
    height: 46px;
}
.logo small {
    color: #999;
    font-size: 20px;
}
.url {
    border-top: 1px solid #fff;
    padding-top: 6px;
    text-align: center;
    font-size: 10px;
}
.tb-rev {
    width: 198px;
    border-collapse: collapse;
    font-size: 9px;
    line-height: 10px;
}
.tb-rev th, .tb-rev td {
    height: 9px;
    padding: 0;
    border: 1px solid #fff;
    font-weight: normal;
}
.tb-rev th {
    height: 13px;
}
.tb-rev th:first-child {
    width: 25px;
}
.tb-rev th:last-child {
    width: 40px;
}
.tb-info {
    display: flex;
    flex: 1;
    border: 1px solid #fff;
}
.client {
    display: flex;
    flex-direction: column;
    gap: 27px;
    width: 215px;
    padding: 3px 7px;
    font-size: 17px;
    line-height: 24px;
}
.details {
    display: flex;
    flex: 1;
    flex-direction: column;
    border-left: 1px solid #fff;
}
.sheet-name {
    position: relative;
    height: 37px;
    padding: 3px 2px;
    color: #0046cc;
    font-size: 17px;
    line-height: 24px;
}
.sheet-name span {
    display: block;
    height: 32px;
    padding-left: 5px;
    border: 1px solid #0046cc;
}
.sheet-name::before, .sheet-name::after {
    content: "";
    position: absolute;
    top: 16px;
    left: -1px;
    width: 7px;
    height: 7px;
    border-radius: 50%;
    background: #5a70b0;
}
.sheet-name::after {
    left: auto;
    right: -1px;
}
.rotate {
    position: absolute;
    top: -4px;
    right: -3px;
    width: 12px;
    height: 14px;
    fill: none;
    stroke: #0046cc;
}
.fields {
    display: flex;
    flex: 1;
    border-top: 1px solid #fff;
}
.fields .left {
    display: grid;
    grid-template-rows: repeat(4, 1fr);
    width: 139px;
}
.fields p {
    display: flex;
    justify-content: space-between;
    padding: 0 6px 0 5px;
    font-size: 8px;
    line-height: 11px;
}
.fields p + p, .number + p {
    border-top: 1px solid #fff;
}
.fields .right {
    display: flex;
    flex: 1;
    flex-direction: column;
    border-left: 1px solid #fff;
}
.number {
    flex: 1;
    padding-top: 6px;
    text-align: center;
    color: #ddd;
    font: 17px/24px "Liberation Sans", sans-serif;
}
.plot-date {
    position: absolute;
    right: 4px;
    bottom: 16px;
    writing-mode: vertical-rl;
    transform: rotate(180deg);
    font-size: 8px;
    line-height: 12px;
}
.doc-btns {
    position: absolute;
    right: 4px;
    top: 6px;
    display: flex;
    gap: 4px;
    color: #ddd;
    font-weight: bold;
}
.doc-btns button {
    width: 14px;
}
.navbar {
    position: absolute;
    right: 2px;
    top: 29px;
    width: 32px;
    height: 113px;
    border-radius: 4px;
    background: #4a4a4a;
}
.navbar svg {
    width: 32px;
    height: 113px;
}
.navbar span {
    position: absolute;
    right: 4px;
    top: 32px;
    color: #3a5f8c;
    font-size: 9px;
    line-height: 12px;
}

/* project browser */
.browser {
    display: flex;
    flex-direction: column;
    width: 219px;
    margin-left: 4px;
}
.tree {
    flex: 1;
    margin: 1px 0 2px;
    padding: 0 0 0 5px;
    border: 1px solid #888;
    border-width: 2px 1px 0 1px;
    background: #fff;
    list-style: none;
}
.tree li {
    display: flex;
    align-items: center;
    height: 20px;
}
.tree li > i {
    position: relative;
    width: 9px;
    height: 9px;
    margin-right: 6px;
}
.tree li > i::after {
    content: "";
    position: absolute;
    left: 9px;
    top: 4px;
    width: 6px;
    border-top: 1px dotted #999;
}
.tree li:not(:last-child) > i::before {
    content: "";
    position: absolute;
    left: 4px;
    top: 9px;
    height: 12px;
    border-left: 1px dotted #999;
}
.tree .exp {
    background:
        linear-gradient(#4b63a8, #4b63a8) center / 5px 1px no-repeat,
        linear-gradient(#4b63a8, #4b63a8) center / 1px 5px no-repeat;
    outline: 1px solid #8a9ab0;
    outline-offset: -1px;
}
.tree svg {
    width: 16px;
    height: 16px;
    margin-right: 4px;
}
.tree a {
    padding: 0 3px;
    color: #111;
    text-decoration: none;
}
.selected a {
    background: #e2e2e2;
}

/* status bar */
.statusbar {
    display: flex;
    justify-content: space-between;
    height: 25px;
    padding: 5px 0 0 2px;
    border-top: 1px solid #999;
    border-bottom: 1px solid #999;
    background: linear-gradient(#ececec, #c3c3c3);
    color: #111;
}
.status-icons {
    display: flex;
    gap: 2px;
    width: 223px;
    margin-top: -5px;
}
.status-icons button {
    display: flex;
    align-items: center;
    justify-content: center;
    width: 24px;
    height: 22px;
    background: #d6d6d6;
}
.status-icons svg {
    width: 17px;
    height: 17px;
}
.status-icons .filter {
    width: auto;
    background: none;
    font-size: 11px;
}

/* tutorial marks */
.marks {
    position: absolute;
    left: 0;
    top: 0;
    width: 100%;
    height: 100%;
    pointer-events: none;
    z-index: 3;
}
.zone {
    fill: rgba(204, 0, 0, .55);
    stroke: #ff0;
    stroke-width: 5;
}
.zone.light {
    fill: rgba(204, 0, 0, .36);
}
.dash {
    fill: none;
    stroke: #ff0;
    stroke-width: 6;
    stroke-dasharray: 24 18;
}
.head {
    fill: none;
    stroke: #ff0;
    stroke-width: 6;
    stroke-linecap: round;
}
.note {
    position: absolute;
    left: 963px;
    top: 478px;
    width: 672px;
    height: 201px;
    padding: 10px 24px;
    background: rgba(230, 240, 215, .28);
    z-index: 3;
}
.note p {
    color: #f30;
    font: 48px/58px "Noto Sans CJK SC", serif;
    text-align: center;
}
.note svg {
    position: absolute;
    left: -3px;
    top: -3px;
    width: 680px;
    height: 208px;
}
.note path {
    fill: none;
    stroke: #f60;
    stroke-width: 6;
    stroke-dasharray: 24 18;
}
.watermark {
    position: absolute;
    right: 9px;
    top: 1052px;
    color: #333;
    font: bold 20px/20px "Liberation Sans", sans-serif;
    text-shadow: 0 0 3px #fff, 0 0 3px #fff, 0 0 3px #fff;
    z-index: 4;
}
```
